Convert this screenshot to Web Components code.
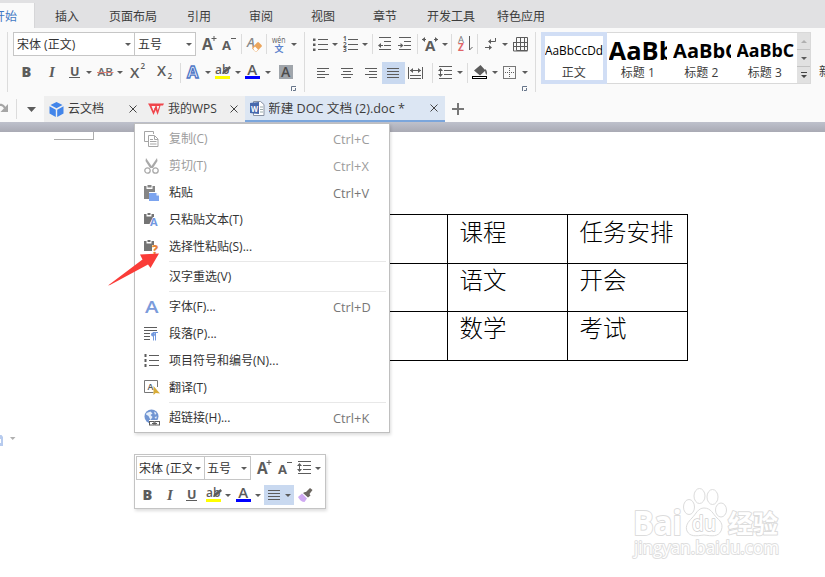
<!DOCTYPE html>
<html lang="zh-CN">
<head>
<meta charset="utf-8">
<title>新建 DOC 文档 (2).doc</title>
<style>
html,body{margin:0;height:100%;overflow:hidden}
body{font:12px/16px "Open Sans","Noto Sans CJK SC",sans-serif;color:#3c3c3c;background:#fff}
</style>
</head>
<body>
<writer-app></writer-app>
<script>
const g = '#5c5c5c';
const T = (x, y, s, t, extra = '') => `<text x="${x}" y="${y}" font-size="${s}" ${extra}>${t}</text>`;
const L = (d, c = g, w = 1) => `<path d="${d}" stroke="${c}" stroke-width="${w}" fill="none"/>`;
// Each entry: [width, height, svg body]
const ICONS = {
  caret: [6, 3, `<path d="M0 0h6L3 3z" fill="${g}"/>`],
  caretL: [9, 5, `<path d="M0 0h9L4.5 5z" fill="${g}"/>`],
  caretG: [6, 3, `<path d="M0 0h6L3 3z" fill="#b0b0b0"/>`],
  rule: [1, 20, `<path d="M0 0h1v20H0z" fill="#dcdcdc"/>`],
  grow: [16, 16, T(0, 15, 15.5, 'A', 'font-weight="700"') + L('M9.500 3.5h5M12 1v5')],
  shrink: [15, 16, T(0, 15, 13, 'A', 'font-weight="700"') + L('M9 3.5h5')],
  clear: [16, 17, T(0, 11, 13, 'A', 'font-weight="600" font-style="italic" fill="#888"') + `<rect x="5.5" y="8" width="9" height="6" rx="1.2" transform="rotate(-45 10 11)" fill="#eba55c"/><path d="M6.200 12.500l1.800-2 3 3-1.500 2h-1.500z" fill="#fff"/>`],
  wen: [14, 18, T(0, 8, 9, 'wén', 'textLength="13.5" lengthAdjust="spacingAndGlyphs"') + T(2.5, 17, 9, '文', 'fill="#5b83cc" font-weight="600"')],
  bullets: [15, 14, L('M5 2.5h10M5 7.5h10M5 12.5h10') + `<path d="M0 1.500h2.500v2.500H0zM0 6.500h2.500v2.500H0zM0 11.500h2.500v2.500H0z" fill="${g}"/>`],
  numbers: [15, 16, L('M5 3.5h10M5 8.5h10M5 13.5h10') + T(0, 5, 6.5, '1', 'font-weight="700"') + T(0, 10.5, 6.5, '2', 'font-weight="700"') + T(0, 16, 6.5, '3', 'font-weight="700"')],
  outdent: [13, 14, L('M1 .5h12M6 4.5h7M6 8.5h7M1 12.5h12') + L('M1 8.5h4') + `<path d="M0 8.5l3-2.5v5z" fill="${g}"/>`],
  indent: [13, 14, L('M1 .5h12M6 4.5h7M6 8.5h7M1 12.5h12') + L('M0 8.5h4') + `<path d="M5.5 8.5l-3-2.5v5z" fill="${g}"/>`],
  scale: [16, 16, T(3, 15, 15, 'A', 'font-weight="700"') + L('M0 3.5h4M12 3.5h4') + `<path d="M0 3.5L3 1v5zM16 3.5L13 1v5z" fill="${g}"/>`],
  sort: [15, 17, T(1, 8, 9.5, 'A', 'fill="#777"') + T(1, 16, 10, 'Z', 'fill="#e06468" font-weight="700"') + L('M12.500 1v14M12.500 15l3-3')],
  wrap: [12, 14, L('M10.5 1v3.5H4M0 10.5h5') + `<path d="M3 4.5L6 2v5zM7 10.5L4 8v5z" fill="${g}"/>`],
  table: [15, 15, L('M3.5 .5h11v13h-11zM.5 5.5h14M.5 9.5h14M.5 5v9h14M7.5 0v14M11.5 0v14')],
  bold: [12, 14, T(0.5, 12, 14.5, 'B', 'font-weight="800"')],
  italic: [10, 14, T(2, 12, 15, 'I', 'font-style="italic" font-weight="700" font-family="Liberation Serif"')],
  under: [12, 14, T(1, 10.5, 12.5, 'U', 'font-weight="700"') + L('M0 12.5h11', g, 1)],
  strike: [17, 14, T(0.5, 11, 11, 'AB', 'font-weight="600" fill="#6a6a6a" textLength="15.5" lengthAdjust="spacingAndGlyphs"') + L('M0 7.500h16.5', '#df8078')],
  sup: [16, 16, T(0, 15, 15, 'X', 'font-weight="600"') + T(10.500, 6, 8, '2', 'font-weight="600"')],
  sub: [16, 16, T(0, 13, 14.500, 'X', 'font-weight="600"') + T(10.500, 15.500, 8, '2', 'font-weight="600"')],
  effect: [16, 16, T(1, 14, 16.5, 'A', 'font-weight="700" fill="#eef3fd" stroke="#4f77c6" stroke-width="1.3"')],
  mark: [16, 16, T(0, 10, 12, 'ab', 'font-weight="600"') + `<path d="M8 7l6.5-5 1.5 2-6 5-3 1z" fill="${g}"/><path d="M0 12h15v3H0z" fill="#ff0"/>`],
  color: [15, 16, T(2.2, 10.5, 15, 'A', 'font-weight="600"') + `<path d="M0 12h15v3H0z" fill="#00f"/>`],
  shade: [14, 14, `<path d="M0 0h14v14H0z" fill="#a0a5ab"/>` + T(2, 12, 14, 'A', 'font-weight="600" fill="#4c4c4c"')],
  left: [12, 12, L('M0 1.5h12M0 4.5h8M0 7.5h12M0 10.5h8')],
  center: [12, 12, L('M0 1.5h12M2 4.5h8M0 7.5h12M2 10.5h8')],
  right: [12, 12, L('M0 1.5h12M4 4.5h8M0 7.5h12M4 10.5h8')],
  justify: [12, 12, L('M0 1.5h12M0 4.5h12M0 7.5h12M0 10.5h12')],
  spread: [15, 12, L('M.5 0v12M14.5 0v12M2 3.5h11M2 8.5h11M2 11.5h11') + `<path d="M2 3.5L5 1v5zM13 3.5L10 1v5z" fill="${g}"/>`],
  spacing: [15, 14, L('M1 .5h13M6 4.5h8M6 8.5h8M1 12.5h13M2.5 4v6') + `<path d="M2.5 2L5 5H0zM2.5 11L5 8H0z" fill="${g}"/>`],
  bucket: [16, 16, `<path d="M2 6.5L8.5 1l5 5.5-5.5 5zM13 5c2 1 2.500 4 1.500 6-1-1-1.500-3-1.500-6z" fill="${g}"/><rect x=".5" y="12.500" width="14" height="2" fill="#fff" stroke="#000"/>`],
  border: [13, 13, `<rect x=".5" y=".5" width="12" height="12" fill="none" stroke="#777"/><path d="M6.500 2v10M2 6.500h10" stroke="${g}" stroke-dasharray="1 1"/>`],
  launch: [5, 5, L('M5 .5H.5V5', '#67758a') + L('M2 4.500h2.500V2', '#67758a')],
  redo: [11, 14, L('M0 5C3 1.500 6 2.500 8 6', '#a6a6a6', 2.200) + `<path d="M11 2v8H3.500z" fill="#a6a6a6"/>`],
  cube: [15, 15, `<path d="M7.500 0l6 3-6 3.300-6-3.300zM.5 4.300l6.300 3.400V15L.5 11.600zM14.500 4.300L8.200 7.700V15l6.300-3.400z" fill="#4285ea"/>`],
  wps: [16, 12, `<path d="M0 .5h16l-1 2h-2.500L9.700 12 7.700 7 5.500 12 1.500 3z" fill="#f0454b"/><path d="M3.500 3l2 5 2-5zM8.700 3l1 4.500L11.300 3z" fill="#f5f5f5"/><path d="M6.500 5.500h2.500" stroke="#f0454b"/>`],
  doc: [15, 15, `<path d="M3.500 .5h7l3.500 3v11H3.500z" fill="#fff" stroke="#8a93a5"/><path d="M10 6h3M10 8.500h3M10 11h3" stroke="#9aa"/><path d="M0 2l9-1v12l-9-1z" fill="#4668ad"/>` + T(1, 10.500, 8, 'W', 'fill="#fff" font-weight="700" textLength="7" lengthAdjust="spacingAndGlyphs"')],
  close: [8, 8, L('M.5.5l7 7M7.500.5l-7 7', '#444')],
  plus: [12, 12, L('M6 0v12M0 6h12', '#777', 2)],
  copy: [15, 16, L('M4 10.500H.5V.5h9V3M4.500 4.500h6l3.500 3.500v7.500H4.500zM10.500 5v3.500H14M6 8.500h3M6 10.500h6.500M6 13h6.500', '#a5a5a5')],
  cut: [15, 16, `<path d="M2 0l5.500 8L13 0l.5 3-4.500 7H6L1.500 3z" fill="#a9a9a9"/>` + L('M6.200 12.500a2.700 2.700 0 1 1-5.400 0 2.700 2.700 0 1 1 5.400 0M14.200 12.500a2.700 2.700 0 1 1-5.400 0 2.700 2.700 0 1 1 5.400 0', '#a9a9a9', 1.300)],
  paste: [16, 16, `<path d="M0 1h2.500v3h6V1H11v6H5v7H0zM3.500 0h4v2.500h-4z" fill="#858585"/><path d="M5 8h7.500L15 10.500V16H5z" fill="#7ca4ef"/><path d="M12.500 8v2.500H15" fill="#fff"/>`],
  pasteA: [16, 16, `<path d="M0 2h2.500v2.500h5V2H10v10H0zM3.500 1h3v2h-3z" fill="#747474"/><path d="M5 13L9 5h2l4 8z" fill="#fff"/>` + T(6, 14, 11, 'A', 'fill="#7298e2" font-weight="700"')],
  pasteQ: [16, 16, `<path d="M0 2h2.500v2.500h5V2H10v10H0zM3.500 1h3v2h-3z" fill="#747474"/><path d="M8 6h7v10H8z" fill="#fff"/>` + T(8, 15, 12, '?', 'fill="#e8853a" font-weight="800"')],
  fontA: [15, 15, T(1, 13.500, 17, 'A', 'fill="#7b9bdb" font-weight="600" textLength="13.500" lengthAdjust="spacingAndGlyphs"')],
  para: [14, 14, L('M0 .5h13M0 3.500h13M0 6.500h6M0 9.500h6M0 12.500h6') + L('M9.500 5.500v8M11.500 5.500v8M9 5.500h5', '#7298dd') + `<circle cx="9" cy="7.500" r="2" fill="#7298dd"/>`],
  list: [15, 14, L('M5 1.500h10M5 6.500h10M5 11.500h10') + `<path d="M.5 0h2v3h-2zM.5 5h2v3h-2zM.5 10h2v3h-2z" fill="${g}"/>`],
  trans: [16, 15, L('M9.500 12.500H.5V.5h13V7', '#777') + T(3.500, 9.500, 9, 'A', 'font-weight="600"') + `<path d="M9.500 6v9l2.200-2 4.300.5z" fill="#d8ac38"/>`],
  link: [16, 17, `<circle cx="7.500" cy="7.500" r="7" fill="#7195d2"/><path d="M2.500 4l4-1.500 2 2-2 1.500 2 2-2 3-2-4-2.500-1.500zM10 2.500l2.500 1.500-1.500 2zM10.500 8l2.500-.5-1 2.500z" fill="#e6effa"/><rect x="5" y="11" width="11" height="6" fill="#fff"/><rect x="5.500" y="12.500" width="4.500" height="3.500" fill="none" stroke="${g}"/><rect x="11" y="12.500" width="4.500" height="3.500" fill="none" stroke="${g}"/>` + L('M8 14.500h5')],
  brush: [16, 16, `<path d="M9 5l4-4 2.500 2-3 4 1 1.500-2.500 2-5-4.500 2-1z" fill="#6b6660"/><path d="M5 6.500l5 5-2.500 3.500c-2.500 0-5-2-6.500-5z" fill="#cfa9f2"/>`],
  dtri: [6, 7, `<path d="M0 0h6v1H0zM0 3h6L3 6z" fill="#444"/>`]
};

class UiIcon extends HTMLElement {
  constructor() { super(); this.attachShadow({ mode: 'open' }); }
  connectedCallback() {
    const [w, h, body] = ICONS[this.getAttribute('name')];
    this.shadowRoot.innerHTML = `<style>:host{display:block;flex:none;width:${w}px;height:${h}px}
      svg{display:block;overflow:visible;font-family:"Open Sans","Noto Sans CJK SC",sans-serif;fill:${g}}</style>
      <svg width="${w}" height="${h}">${body}</svg>`;
  }
}
customElements.define('ui-icon', UiIcon);

// A row of tools. Each spec token is "icon:left:top", turned into flow gaps.
class ToolRow extends HTMLElement {
  constructor() { super(); this.attachShadow({ mode: 'open' }); }
  connectedCallback() {
    let end = +this.getAttribute('start') || 0;
    const cells = this.getAttribute('items').trim().split(/\s+/).map(s => {
      const [n, x, y, hot] = s.split(':');
      const w = ICONS[n][0], gap = x - end;
      end = +x + w;
      return `<ui-icon name="${n}" class="${hot || ''}" style="margin:${y}px 0 0 ${gap}px"></ui-icon>`;
    }).join('');
    this.shadowRoot.innerHTML = `<style>:host{display:flex;align-items:flex-start;flex:none}
      .hot{box-shadow:0 0 0 5px #c9d9f0,1px 0 0 5px #c9d9f0;background:#c9d9f0}
      .wide{box-shadow:0 0 0 4px #c9d9f0,10px 0 0 4px #c9d9f0;background:#c9d9f0}
      .wide+ui-icon{position:relative}</style>${cells}`;
  }
}
customElements.define('tool-row', ToolRow);

class ComboBox extends HTMLElement {
  constructor() {
    super();
    this.attachShadow({ mode: 'open' }).innerHTML = `<style>
      :host{display:flex;box-sizing:border-box;height:24px;border:1px solid #c6c6c6;align-items:center;background:#fff;padding:0 3px;color:#333;flex:none}
      span{flex:1;overflow:hidden;white-space:nowrap;padding-top:1px;margin-right:3px}ui-icon{margin-top:1px}</style><span><slot></slot></span><ui-icon name="caret"></ui-icon>`;
  }
}
customElements.define('combo-box', ComboBox);

class MenuTabs extends HTMLElement {
  constructor() {
    super();
    this.attachShadow({ mode: 'open' }).innerHTML = `<style>
      :host{display:flex;height:28px;background:#e1e1e3;overflow:hidden;flex:none;white-space:nowrap}
      b{font-weight:400;width:34px;margin-top:3px;background:#fafafa;border-right:1px solid #d6d6d8;color:#4279c4;box-sizing:content-box;overflow:hidden}
      b i{font-style:normal;display:block;margin:6px 0 0 -7px}
      span{margin-top:9px;flex:none}</style>
      <b><i>开始</i></b>` + [['插入', 20], ['页面布局', 30], ['引用', 30], ['审阅', 38], ['视图', 38], ['章节', 38], ['开发工具', 30], ['特色应用', 22]]
        .map(([t, m]) => `<span style="margin-left:${m}px">${t}</span>`).join('');
  }
}
customElements.define('menu-tabs', MenuTabs);

class StyleGallery extends HTMLElement {
  constructor() {
    super();
    this.attachShadow({ mode: 'open' }).innerHTML = `<style>
      :host{display:flex;box-sizing:border-box;width:270px;height:52px;margin:32px 0 0 5px;background:#fff;border:1px solid #d9d9d9;border-left:0;flex:none}
      .c{width:64px;height:50px;box-sizing:border-box;text-align:center;overflow:hidden}
      .c p{margin:2px 0 0 3px;height:31px;width:58px;line-height:31px;overflow:hidden;color:#000;white-space:nowrap;text-align:left}
      .c.on{width:66px;height:52px;margin-top:-1px;border:4px solid #d1def5}
      .c.on p{margin:0;width:58px;font-size:12.5px;line-height:29px;height:28px}
      .c small{display:block;font-size:12px;line-height:16px;margin-top:1px}
      .c:not(.on) small{margin-top:-1px;padding-right:1px}
      b{font-weight:700}
      nav{width:13px;margin-left:auto;display:grid;grid-template-rows:repeat(3,1fr);gap:1px;background:#c2c2c2}
      nav div{background:#e1e1e1;display:flex;align-items:center;justify-content:center}
      nav div:first-child ui-icon{transform:rotate(180deg)}</style>
      <div class="c on"><p><svg width="58" height="28" style="display:block"><text x="0" y="19" font-size="12.5" textLength="58" lengthAdjust="spacingAndGlyphs">AaBbCcDd</text></svg></p><small>正文</small></div>
      <div class="c"><p style="font-size:25.500px;margin-left:2px"><b>AaBb</b></p><small>标题 1</small></div>
      <div class="c"><p style="font-size:20px"><b>AaBbC</b></p><small>标题 2</small></div>
      <div class="c"><p style="font-size:17.800px"><b>AaBbC</b></p><small>标题 3</small></div>
      <nav><div><ui-icon name="caretG"></ui-icon></div><div><ui-icon name="caret"></ui-icon></div><div><ui-icon name="dtri"></ui-icon></div></nav>`;
  }
}
customElements.define('style-gallery', StyleGallery);

class RibbonBar extends HTMLElement {
  constructor() {
    super();
    this.attachShadow({ mode: 'open' }).innerHTML = `<style>
      :host{display:flex;height:68px;background:#fafafa;overflow:hidden;flex:none}
      section{flex:none;height:60px;margin-top:4px;border-right:1px solid #dcdcdc;box-sizing:border-box}
      .r{display:flex;height:27px}
      style-gallery{margin-top:4px}
      .new{margin:36px 0 0 8px;white-space:nowrap}</style>
      <section style="width:8px"></section>
      <section style="width:297px">
        <div class="r"><combo-box style="margin-left:5px;width:122px">宋体 (正文)</combo-box><combo-box style="width:62px;margin-left:-1px">五号</combo-box>
        <tool-row start="196" items="grow:202:3 shrink:222:3 rule:241:2 clear:247:4 rule:266:2 wen:272:3 caret:291:11"></tool-row></div>
        <div class="r"><tool-row start="8" items="bold:21:6 italic:47:6 under:69:6 caret:86:12 strike:97:6 caret:117:12 sup:130:4 sub:157:4 rule:180:4 effect:186:5 caret:205:12 mark:215:5 caret:235:12 color:245:5 caret:265:12 shade:279:6"></tool-row></div>
        <tool-row start="8" items="launch:291:0"></tool-row>
      </section>
      <section style="width:231px">
        <tool-row class="r" start="305" items="bullets:313:5 caret:332:11 numbers:343:4 caret:362:11 rule:372:2 outdent:378:5 indent:398:5 rule:417:2 scale:422:4 caret:442:11 rule:451:2 sort:457:3 rule:477:2 wrap:485:5 caret:502:11 table:513:5"></tool-row>
        <tool-row class="r" start="305" items="left:317:8 center:341:8 right:365:8 justify:387:8:hot spread:408:8 rule:432:4 spacing:438:7 caret:457:12 rule:467:4 bucket:472:5 caret:492:12 border:503:7 caret:522:12"></tool-row>
        <tool-row start="305" items="launch:522:0"></tool-row>
      </section>
      <style-gallery></style-gallery><span class="new">新</span>`;
  }
}
customElements.define('ribbon-bar', RibbonBar);

class DocTab extends HTMLElement {
  constructor() {
    super();
    this.attachShadow({ mode: 'open' }).innerHTML = `<style>
      :host{display:flex;box-sizing:border-box;align-items:center;height:26px;background:#efefef;flex:none;padding:0 8px 0 5px}
      :host([active]){background:#dce6f3;border-bottom:2px solid #7ba6dc;padding-right:7px}
      :host([active]) span{padding-top:2px}
      span{flex:1;margin-left:4px;white-space:nowrap}</style><slot name="i"></slot><span><slot></slot></span><ui-icon name="close"></ui-icon>`;
  }
}
customElements.define('doc-tab', DocTab);

class DocTabs extends HTMLElement {
  constructor() {
    super();
    this.attachShadow({ mode: 'open' }).innerHTML = `<style>
      :host{display:flex;height:26px;background:#fafafa;flex:none;overflow:hidden}
      svg{display:block}</style>
      <tool-row items="redo:-3:6 rule:16:3 caretL:27:11" style="width:44px"></tool-row>
      <doc-tab style="width:99px;padding-right:6px"><ui-icon slot="i" name="cube"></ui-icon>云文档</doc-tab>
      <doc-tab style="width:102px;padding-right:7px"><ui-icon slot="i" name="wps"></ui-icon>我的WPS</doc-tab>
      <doc-tab active style="width:200px"><ui-icon slot="i" name="doc"></ui-icon><svg width="138" height="18"><text x="-1" y="13" font-size="12" fill="#3c3c3c" textLength="137" lengthAdjust="spacingAndGlyphs">新建 DOC 文档 (2).doc *</text></svg></doc-tab>
      <ui-icon name="plus" style="margin:7px 0 0 7px"></ui-icon>`;
  }
}
customElements.define('doc-tabs', DocTabs);

class MenuItem extends HTMLElement {
  constructor() { super(); this.attachShadow({ mode: 'open' }); }
  connectedCallback() {
    const i = this.getAttribute('icon'), k = this.getAttribute('key');
    this.shadowRoot.innerHTML = `<style>
      :host{display:grid;grid-template-columns:34px 164px 1fr;align-items:center;height:27px;color:#333}
      :host([off]){color:#9c9c9c}
      div{padding-left:9px} span{white-space:nowrap}
      .k{color:#777;font-size:12.800px}:host([off]) .k{color:#9c9c9c}</style>
      <div>${i ? `<ui-icon name="${i}"></ui-icon>` : ''}</div><span><slot></slot></span><span class="k">${k || ''}</span>`;
  }
}
customElements.define('menu-item', MenuItem);

class ContextMenu extends HTMLElement {
  constructor() {
    super();
    this.attachShadow({ mode: 'open' }).innerHTML = `<style>
      :host{display:block;box-sizing:border-box;width:256px;height:310px;border:1px solid #bfbfbf;background:#fff;padding:1px 0;box-shadow:1px 2px 3px #0002}
      hr{border:0;height:1px;background:#e8e8e8;margin:1px 3px 1px 34px}</style>
      <menu-item off icon="copy" key="Ctrl+C">复制(C)</menu-item>
      <menu-item off icon="cut" key="Ctrl+X">剪切(T)</menu-item>
      <menu-item icon="paste" key="Ctrl+V">粘贴</menu-item>
      <menu-item icon="pasteA">只粘贴文本(T)</menu-item>
      <menu-item icon="pasteQ">选择性粘贴(S)...</menu-item><hr>
      <menu-item>汉字重选(V)</menu-item><hr>
      <menu-item icon="fontA" key="Ctrl+D">字体(F)...</menu-item>
      <menu-item icon="para">段落(P)...</menu-item>
      <menu-item icon="list">项目符号和编号(N)...</menu-item>
      <menu-item icon="trans">翻译(T)</menu-item><hr>
      <menu-item icon="link" key="Ctrl+K">超链接(H)...</menu-item>`;
  }
}
customElements.define('context-menu', ContextMenu);

class MiniBar extends HTMLElement {
  constructor() {
    super();
    this.attachShadow({ mode: 'open' }).innerHTML = `<style>
      :host{display:block;box-sizing:border-box;width:192px;height:55px;border:1px solid #c4c4c4;background:#fff;padding:1px;box-shadow:1px 2px 3px #0002}
      div{display:flex;height:26px}combo-box{padding:0 3px 0 2px}</style>
      <div><combo-box style="width:69px">宋体 (正文)</combo-box><combo-box style="width:47px;margin-left:-1px">五号</combo-box>
      <tool-row start="251" items="grow:257:3 shrink:278:3 spacing:297:5 caret:315:11"></tool-row></div>
      <tool-row start="136" items="bold:142:6 italic:165:6 under:186:6 mark:206:5 caret:225:12 color:236:5 caret:255:12 justify:268:7:wide caret:285:12 brush:297:5"></tool-row>`;
  }
}
customElements.define('mini-bar', MiniBar);

class DocPage extends HTMLElement {
  constructor() {
    super();
    const rows = [['', '课程', '任务安排'], ['', '语文', '开会'], ['', '数学', '考试']];
    this.attachShadow({ mode: 'open' }).innerHTML = `<style>
      :host{display:flex;flex-direction:column;flex:1;background:#fff}
      .band{height:10px;background:linear-gradient(#bec1cc,#a9aab4);flex:none}
      .corner{width:39px;height:7px;margin-left:54px;border:solid #adadad;border-width:0 1px 1px 0;flex:none}
      table{border-collapse:collapse;margin:74px 0 0 327px;table-layout:fixed;width:361px;font:300 23.500px/30px "Noto Sans CJK SC",sans-serif;color:#000}
      td{border:1px solid #000;padding:1px 0 0 11.500px;vertical-align:top;box-sizing:border-box}
      tr{height:48px}tr:first-child{height:49px} tr:last-child{height:49px}tr:not(:first-child) td{padding-top:0}</style>
      <div class="band"></div><div class="corner"></div>
      <table>${rows.map(r => `<tr>${r.map(c => `<td>${c}</td>`).join('')}</tr>`).join('')}</table>`;
  }
}
customElements.define('doc-page', DocPage);

class WaterMark extends HTMLElement {
  constructor() {
    super();
    this.attachShadow({ mode: 'open' }).innerHTML = `<style>:host{display:block}
      svg{display:block;overflow:visible;fill:#fff;stroke:#dcdcdc;stroke-width:1;font-family:"Open Sans","Noto Sans CJK SC",sans-serif}
      text{paint-order:stroke;stroke-width:2px;stroke-linejoin:round}</style>
      <svg width="150" height="75">
      <text x="1" y="45" font-size="34" font-weight="700" textLength="49" lengthAdjust="spacingAndGlyphs">Bai</text>
      <ellipse cx="57" cy="17" rx="5.500" ry="7.500"/><ellipse cx="67.500" cy="6" rx="5.500" ry="7.500"/><ellipse cx="80.500" cy="7" rx="5.500" ry="7.500"/><ellipse cx="89" cy="20" rx="5.500" ry="7"/>
      <path d="M72 18c7 0 9 6 13 10 5 4 6 8 4 13-3 6-9 5-17 4-8 1-14 2-17-4-2-5 1-9 5-13 4-4 6-10 12-10z"/>
      <text x="60" y="41" font-size="21" font-weight="600" textLength="24" lengthAdjust="spacingAndGlyphs" style="stroke-width:1.500px;stroke:#d0d0d0">du</text>
      <text x="96" y="42.500" font-size="25" font-weight="700">经验</text>
      <text x="2" y="64" font-size="18" textLength="145" lengthAdjust="spacingAndGlyphs" style="stroke-width:2px;stroke:#dedede">jingyan.baidu.com</text></svg>`;
  }
}
customElements.define('water-mark', WaterMark);

class WriterApp extends HTMLElement {
  constructor() {
    super();
    this.attachShadow({ mode: 'open' }).innerHTML = `<style>
      :host{display:flex;flex-direction:column;position:relative;width:825px;height:577px;overflow:hidden}
      context-menu,mini-bar,water-mark,.arrow,.tag{position:absolute}
      context-menu{left:134px;top:123px}mini-bar{left:134px;top:454px}
      water-mark{left:632px;top:490px}.arrow{left:108px;top:253px}
      .tag{left:0;top:434px}</style>
      <menu-tabs></menu-tabs><ribbon-bar></ribbon-bar><doc-tabs></doc-tabs><doc-page></doc-page>
      <context-menu></context-menu><mini-bar></mini-bar><water-mark></water-mark>
      <svg class="arrow" width="52" height="34"><path d="M0 32.500L34.500 6.500 32 1.500 51 .5 42.500 15 40 11.500 2 32z" fill="#fa3c38"/></svg>
      <svg class="tag" width="16" height="12"><path d="M0 1h1.500l1.500 2v9H0z" fill="#b7cbee"/><path d="M0 5h1v4H0z" fill="#fff"/><path d="M10 3h5.500L12.700 6z" fill="#b0b0b0"/></svg>`;
  }
}
customElements.define('writer-app', WriterApp);
</script>
</body>
</html>
